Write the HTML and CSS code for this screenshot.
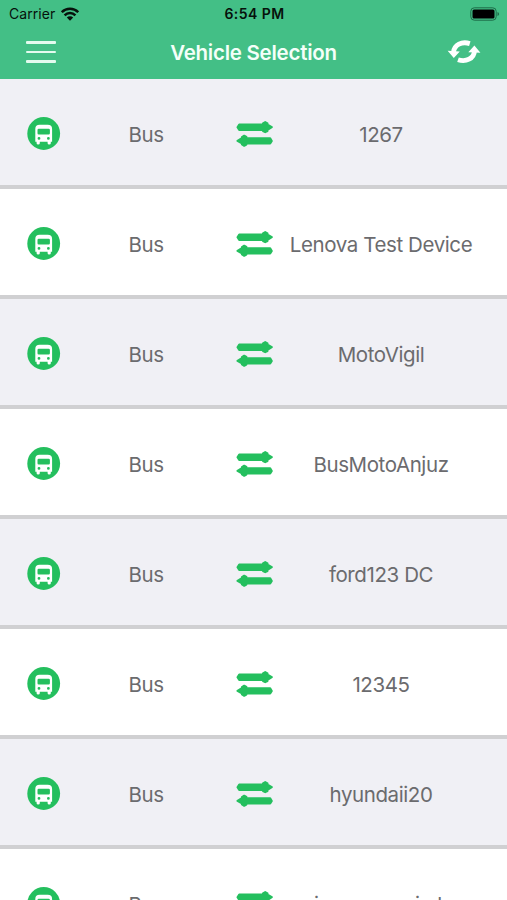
FILE: index.html
```html
<!DOCTYPE html>
<html lang="en">
<head>
<meta charset="utf-8">
<title>Vehicle Selection</title>
<link rel="stylesheet" href="styles.css">
</head>
<body>
<svg class="defs" aria-hidden="true">
  <symbol id="bus" viewBox="0 0 34 34">
    <circle cx="16.700" cy="16.500" r="16.400" fill="#24bf5e"/>
    <path fill="#fff" fill-rule="evenodd" d="M12.700 7.800h8q4.400 0 4.400 4.200v12.800h-1.300v1.400q0 1.400-1.600 1.400t-1.600-1.400v-1.400h-7.800v1.400q0 1.400-1.600 1.400t-1.600-1.400v-1.400H8.300V12q0-4.200 4.400-4.200zM11.700 11.800q-1.200 0-1.200 1.200v3.200q0 1.200 1.200 1.200h10q1.200 0 1.200-1.200V13q0-1.200-1.200-1.200zM12 20a1.400 1.400 0 1 0 0 2.800 1.400 1.400 0 0 0 0-2.800zM21.400 20a1.400 1.400 0 1 0 0 2.800 1.400 1.400 0 0 0 0-2.800z"/>
  </symbol>
  <symbol id="swap" viewBox="0 0 38 28">
    <path fill="#24bf5e" stroke="#24bf5e" stroke-width="2" stroke-linejoin="round" d="M3.200 4.500H27V3.300l2.200-1.200 2.300 1.300v1.200L35.800 7.200 31.500 10v1L29.200 12.200 27 11V9.900H3.200L1.500 7.200zM34.200 18.200H10.400v-1.300l-2.200-1.200-2.300 1.300v1.200L1.500 20.900l4.400 2.600v1L8.200 25.800l2.200-1.200v-1h23.800l1.600-2.700z"/>
  </symbol>
</svg>
<header class="header">
  <div class="status">
    <div class="carrier">Carrier
      <svg class="wifi" viewBox="0 0 18 14"><g fill="none" stroke="#06110b" stroke-width="2.500"><path d="M.8 5.200a11.600 11.600 0 0 1 16.400 0"/><path d="M3.600 8.300a7.600 7.600 0 0 1 10.800 0"/></g><path fill="#06110b" d="M5.800 10.500a4.500 4.500 0 0 1 6.400 0L9 13.800z"/></svg>
    </div>
    <div class="time">6:54 PM</div>
    <svg class="battery" viewBox="0 0 30 14"><rect x=".8" y=".8" width="25.400" height="12.400" rx="3.500" fill="none" stroke="#1d6b48"/><rect x="2.500" y="2.500" width="22" height="9" rx="1.500" fill="#000"/><path d="M27.500 5v4q1.600-.6 1.600-2t-1.600-2z" fill="#1d6b48"/></svg>
  </div>
  <div class="nav">
    <div class="menu"><i></i><i></i><i></i></div>
    <h1 class="title">Vehicle Selection</h1>
    <svg class="refresh" viewBox="0 0 34 26"><g fill="none" stroke="#fff" stroke-width="4.800"><path d="M6.500 13C7.500 6 14.500 2 22.800 4.600"/><path d="M27.500 12C27 19.500 19 23.500 11 20.700"/></g><path fill="#fff" d="M.6 11.800l12.200.6L6.800 19zM21.300 13.300L27.400 6.500l6 7.200z"/></svg>
  </div>
</header>
<main class="list">
  <div class="row"><svg class="bus"><use href="#bus"/></svg><span class="type">Bus</span><svg class="swap"><use href="#swap"/></svg><span class="name">1267</span></div>
  <div class="row"><svg class="bus"><use href="#bus"/></svg><span class="type">Bus</span><svg class="swap"><use href="#swap"/></svg><span class="name">Lenova Test Device</span></div>
  <div class="row"><svg class="bus"><use href="#bus"/></svg><span class="type">Bus</span><svg class="swap"><use href="#swap"/></svg><span class="name">MotoVigil</span></div>
  <div class="row"><svg class="bus"><use href="#bus"/></svg><span class="type">Bus</span><svg class="swap"><use href="#swap"/></svg><span class="name">BusMotoAnjuz</span></div>
  <div class="row"><svg class="bus"><use href="#bus"/></svg><span class="type">Bus</span><svg class="swap"><use href="#swap"/></svg><span class="name">ford123 DC</span></div>
  <div class="row"><svg class="bus"><use href="#bus"/></svg><span class="type">Bus</span><svg class="swap"><use href="#swap"/></svg><span class="name">12345</span></div>
  <div class="row"><svg class="bus"><use href="#bus"/></svg><span class="type">Bus</span><svg class="swap"><use href="#swap"/></svg><span class="name">hyundaii20</span></div>
  <div class="row"><svg class="bus"><use href="#bus"/></svg><span class="type">Bus</span><svg class="swap"><use href="#swap"/></svg><span class="name">innowa amimk</span></div>
</main>
</body>
</html>
```
FILE: styles.css
```css
* { box-sizing: border-box; }
html, body { height: 100%; }
body {
  margin: 0;
  overflow: hidden;
  background: #fff;
  font-family: Inter, "Liberation Sans", sans-serif;
}
.defs { position: absolute; width: 0; height: 0; }
.header { height: 79px; background: #43bf86; }
.status {
  display: grid;
  grid-template-columns: 1fr auto 1fr;
  align-items: center;
  height: 27px;
  padding: 0 7px 0 9px;
  color: #06110b;
}
.carrier { display: flex; align-items: center; gap: 6px; font-size: 14px; letter-spacing: .05px; }
.wifi { width: 18px; height: 14px; }
.time { font-size: 14px; font-weight: 600; letter-spacing: .45px; }
.battery { width: 30px; height: 14px; justify-self: end; }
.nav {
  display: grid;
  grid-template-columns: 1fr auto 1fr;
  align-items: center;
  height: 50px;
  padding: 0 26px;
}
.menu { display: flex; flex-direction: column; gap: 6.500px; width: 30px; }
.menu i { height: 2.700px; border-radius: 1px; background: #e4fbef; }
.title { margin: 0; padding-top: 1px; color: #f4fff9; font-size: 20.5px; font-weight: 560; line-height: 24px; letter-spacing: -.25px; }
.refresh { width: 34px; height: 26px; justify-self: end; }
.list { height: calc(100vh - 79px); overflow: hidden; }
.row {
  display: grid;
  grid-template-columns: 87px 118px 99px 154px;
  align-items: center;
  justify-items: center;
  height: 110px;
  padding-top: 4px;
  border-bottom: 4px solid #d0d0d2;
  background: #fff;
  color: #6b6b6e;
  font-size: 20.5px;
  line-height: 26px;
  letter-spacing: -.4px;
}
.row:nth-child(odd) { background: #f0f0f5; }
.bus { width: 34px; height: 34px; }
.swap { width: 38px; height: 28px; }
.type, .name { padding-top: 1px; }
.name { white-space: nowrap; }
```
